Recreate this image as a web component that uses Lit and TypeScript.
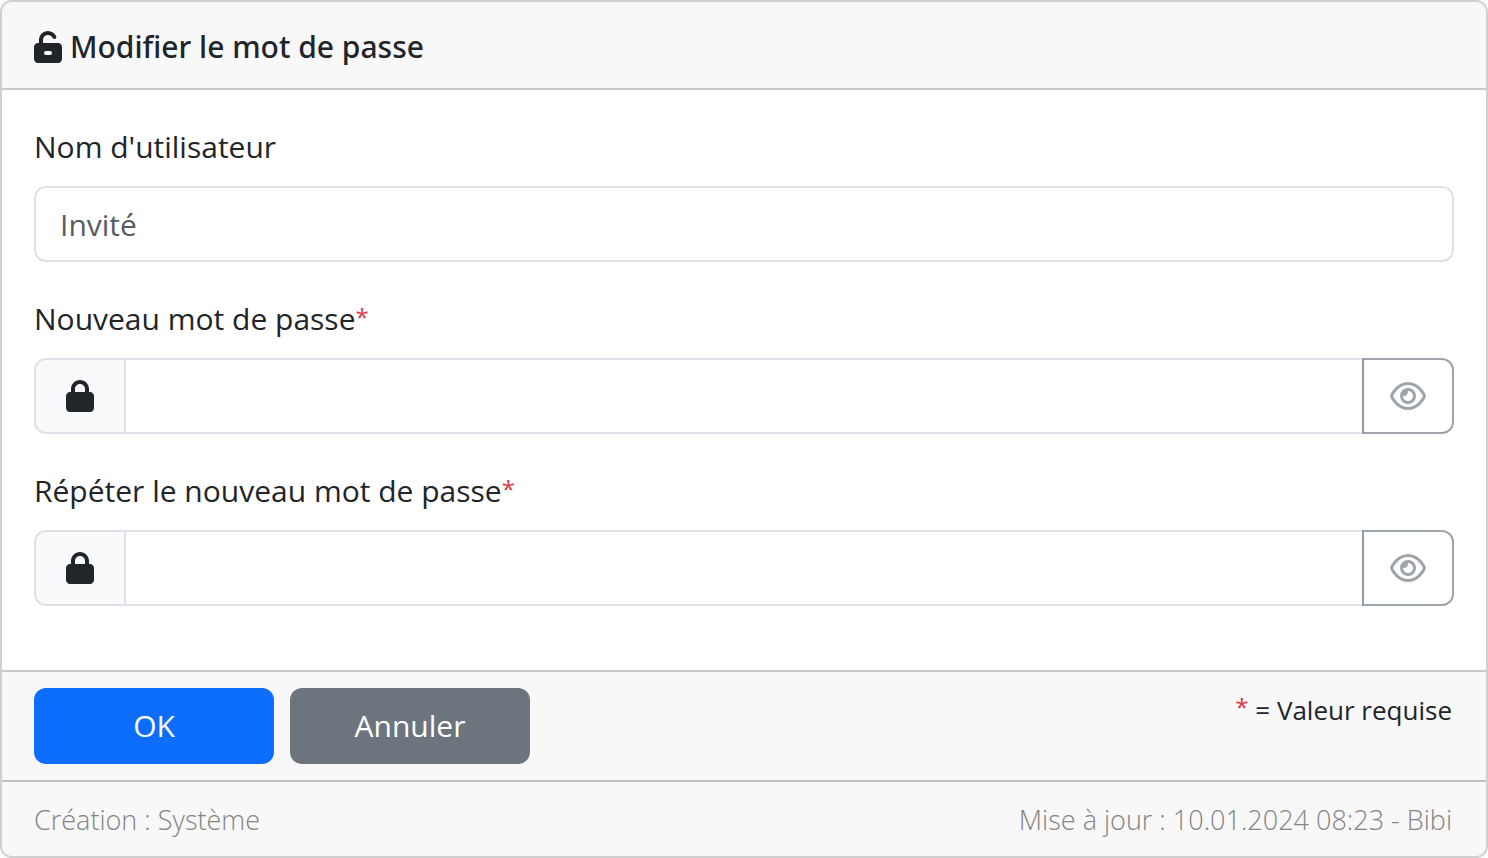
import { LitElement, html, css } from "lit";
import { customElement } from "lit/decorators.js";

const lockIcon = html`<svg class="icon" viewBox="0 0 448 512" width="28" height="32" aria-hidden="true"><path d="M144 144v48H304V144c0-44.2-35.8-80-80-80s-80 35.8-80 80zM80 192V144C80 64.5 144.5 0 224 0s144 64.5 144 144v48h16c35.3 0 64 28.7 64 64V448c0 35.3-28.7 64-64 64H64c-35.3 0-64-28.7-64-64V256c0-35.3 28.7-64 64-64H80z"/></svg>`;

const unlockIcon = html`<svg class="icon" viewBox="0 0 448 512" width="28" height="32" aria-hidden="true"><path d="M224 64c-44.2 0-80 35.8-80 80v48H384c35.3 0 64 28.7 64 64V448c0 35.3-28.7 64-64 64H64c-35.3 0-64-28.7-64-64V256c0-35.3 28.7-64 64-64H80V144C80 64.5 144.5 0 224 0c57.5 0 107 33.7 130.1 82.3c7.6 16 .8 35.1-15.2 42.6s-35.1 .8-42.6-15.2C283.4 82.6 255.9 64 224 64zm32 320c17.7 0 32-14.3 32-32s-14.3-32-32-32H192c-17.7 0-32 14.3-32 32s14.3 32 32 32h64z"/></svg>`;

const eyeIcon = html`<svg class="icon" viewBox="0 0 576 512" width="36" height="32" aria-hidden="true"><path d="M288 80c-65.2 0-118.8 29.6-159.9 67.7C89.6 183.5 63 226 49.4 256c13.6 30 40.2 72.5 78.6 108.3C169.2 402.4 222.8 432 288 432s118.8-29.6 159.9-67.7C486.4 328.5 513 286 526.6 256c-13.6-30-40.2-72.5-78.6-108.3C406.8 109.6 353.2 80 288 80zM95.4 112.6C142.5 68.8 207.2 32 288 32s145.5 36.8 192.6 80.6c46.8 43.5 78.1 95.4 93 131.1c3.3 7.9 3.3 16.7 0 24.6c-14.9 35.7-46.2 87.7-93 131.1C433.5 443.2 368.8 480 288 480s-145.5-36.8-192.6-80.6C48.6 356 17.3 304 2.5 268.3c-3.3-7.9-3.3-16.7 0-24.6C17.3 208 48.6 156.1 95.4 112.6zM288 336c44.2 0 80-35.8 80-80s-35.8-80-80-80c-.7 0-1.3 0-2 0c1.3 5.1 2 10.5 2 16c0 35.3-28.7 64-64 64c-5.5 0-10.9-.7-16-2c0 .7 0 1.3 0 2c0 44.2 35.8 80 80 80zm0-208a128 128 0 1 1 0 256 128 128 0 1 1 0-256z"/></svg>`;

@customElement("app-root")
export class AppRoot extends LitElement {
  static styles = css`
    :host {
      display: block;
      font-family: "Open Sans", "Noto Sans", sans-serif;
      font-size: 30px;
      line-height: 50px;
      color: #212529;
    }
    * {
      box-sizing: border-box;
    }
    .card {
      border: 2px solid #cfcfcf;
      border-radius: 12px;
      background: #fff;
      overflow: hidden;
    }
    .header {
      display: flex;
      align-items: center;
      gap: 8px;
      padding: 20px 32px 16px;
      background: #f8f8f8;
      border-bottom: 2px solid #c8c8c8;
    }
    .title {
      margin: 0;
      font-family: "Noto Sans", "Open Sans", sans-serif;
      font-size: 30px;
      font-weight: 500;
    }
    .icon {
      display: block;
      flex: none;
      fill: currentColor;
    }
    .body {
      display: grid;
      gap: 32px;
      padding: 32px 32px 64px;
    }
    .field {
      display: grid;
      gap: 14px;
    }
    .required {
      color: #dc3545;
      font-size: 24px;
      line-height: 1;
      vertical-align: 4px;
    }
    .input {
      display: block;
      flex: 1;
      width: 100%;
      min-width: 0;
      margin: 0;
      height: 76px;
      padding: 12px 24px;
      font: inherit;
      color: #212529;
      background: #fff;
      border: 2px solid #dee2e6;
      border-radius: 12px;
      outline: none;
    }
    .input::placeholder {
      color: #595c5f;
      opacity: 1;
    }
    .group {
      display: flex;
    }
    .group .input {
      margin-left: -2px;
      border-radius: 0;
    }
    .addon {
      display: flex;
      align-items: center;
      padding: 0 30px;
      background: #f8f9fa;
      border: 2px solid #dee2e6;
      border-radius: 12px 0 0 12px;
    }
    .toggle {
      display: flex;
      align-items: center;
      margin: 0 0 0 -2px;
      padding: 0 26px;
      color: #6c757d;
      background: transparent;
      border: 2px solid #6c757d;
      border-radius: 0 12px 12px 0;
      opacity: 0.65;
    }
    .actions {
      display: flex;
      justify-content: space-between;
      align-items: flex-start;
      padding: 16px 34px 16px 32px;
      background: #f8f8f8;
      border-top: 2px solid #c8c8c8;
    }
    .buttons {
      display: flex;
      gap: 16px;
    }
    .button {
      width: 240px;
      margin: 0;
      padding: 13px 24px;
      font: inherit;
      color: #fff;
      border: 0;
      border-radius: 12px;
      cursor: pointer;
    }
    .primary {
      background: #0d6efd;
    }
    .secondary {
      background: #6c757d;
    }
    .note {
      font-size: 26px;
      line-height: 44px;
    }
    .meta {
      display: flex;
      justify-content: space-between;
      padding: 16px 34px 14px 32px;
      font-size: 27px;
      font-weight: 300;
      line-height: 44px;
      color: #848484;
      background: #f8f8f8;
      border-top: 2px solid #c0c0c0;
    }
  `;

  private passwordField(id: string, label: string) {
    return html`
      <div class="field">
        <label for=${id}>${label}<span class="required">*</span></label>
        <div class="group">
          <span class="addon">${lockIcon}</span>
          <input class="input" id=${id} type="password" autocomplete="new-password" required />
          <button class="toggle" type="button" disabled aria-label="Afficher le mot de passe">${eyeIcon}</button>
        </div>
      </div>
    `;
  }

  render() {
    return html`
      <form class="card">
        <header class="header">
          ${unlockIcon}
          <h1 class="title">Modifier le mot de passe</h1>
        </header>
        <div class="body">
          <div class="field">
            <label for="username">Nom d'utilisateur</label>
            <input class="input" id="username" type="text" placeholder="Invité" readonly />
          </div>
          ${this.passwordField("password", "Nouveau mot de passe")}
          ${this.passwordField("confirmation", "Répéter le nouveau mot de passe")}
        </div>
        <div class="actions">
          <div class="buttons">
            <button class="button primary" type="button">OK</button>
            <button class="button secondary" type="button">Annuler</button>
          </div>
          <span class="note"><span class="required">*</span> = Valeur requise</span>
        </div>
        <footer class="meta">
          <span>Création : Système</span>
          <span>Mise à jour : 10.01.2024 08:23 - Bibi</span>
        </footer>
      </form>
    `;
  }
}
